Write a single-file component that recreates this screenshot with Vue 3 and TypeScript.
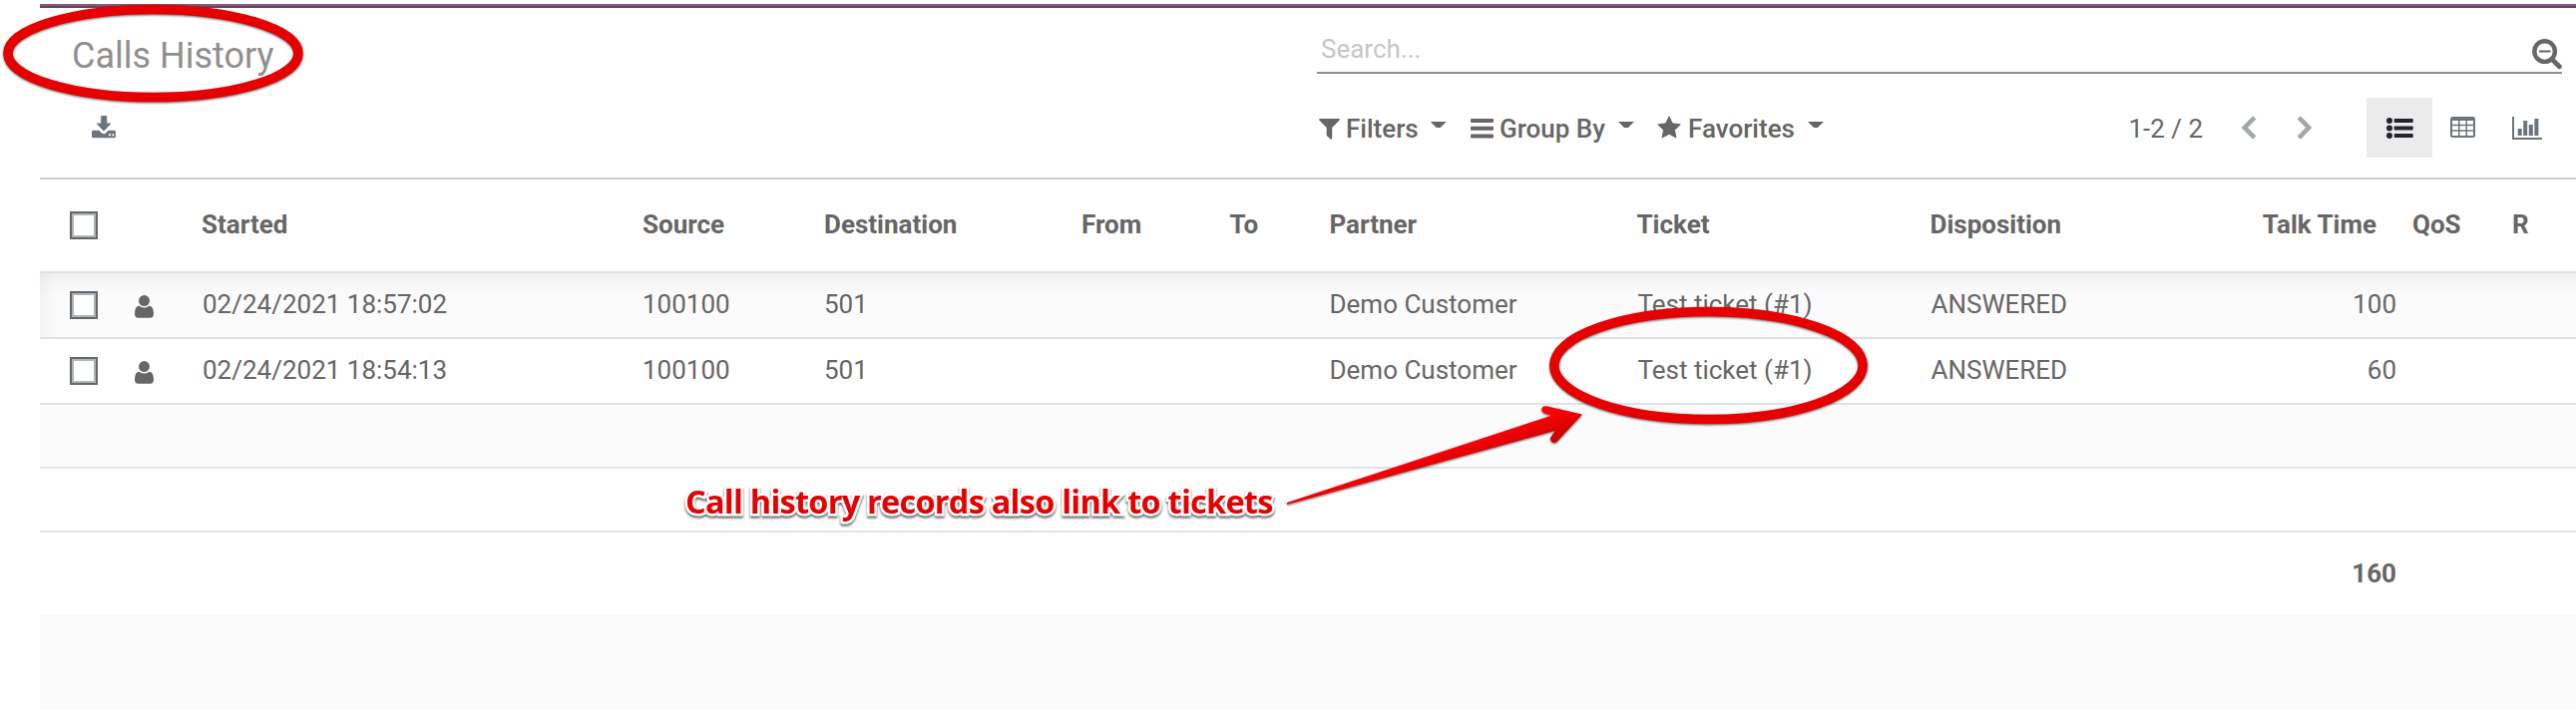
<script setup lang="ts">
interface Call { started: string; source: string; destination: string; partner: string; ticket: string; disposition: string; talk: number }
const calls: Call[] = [
  { started: '02/24/2021 18:57:02', source: '100100', destination: '501', partner: 'Demo Customer', ticket: 'Test ticket (#1)', disposition: 'ANSWERED', talk: 100 },
  { started: '02/24/2021 18:54:13', source: '100100', destination: '501', partner: 'Demo Customer', ticket: 'Test ticket (#1)', disposition: 'ANSWERED', talk: 60 },
]
const total = calls.reduce((sum, c) => sum + c.talk, 0)
</script>

<template>
  <div class="page">
    <main class="panel">
      <div class="brandbar"></div>
      <header class="control">
        <div class="left">
          <h1>Calls History</h1>
          <button class="export" aria-label="Export">
            <svg width="24" height="23" viewBox="0 0 24 23">
              <path fill="#6c757d" d="M10 0h4.300q.9 0 .9.900V7.500h3.500q1 0 .4.800L12.700 15q-.7.700-1.400 0L5 8.300q-.6-.8.400-.8h3.700V.9q0-.9.900-.9z" />
              <path fill="#6c757d" fill-rule="evenodd" d="M1.500 14.700h5.800l2.500 2.500q2.200 2 4.400 0l2.500-2.500h5.800q1.500 0 1.500 1.500v4.600q0 1.500-1.500 1.500h-21Q0 22.300 0 20.800v-4.600q0-1.500 1.500-1.500zM17 18.300v1.900h1.900v-1.900zM20.400 18.300v1.900h1.900v-1.900z" />
            </svg>
          </button>
        </div>
        <div class="right">
          <div class="search">
            <span>Search...</span>
            <svg width="31" height="31" viewBox="0 0 31 31" fill="none" stroke="#666">
              <circle cx="13.600" cy="12.600" r="10.300" stroke-width="4.400" />
              <path d="M21 20.500l7.300 7.200" stroke-width="4.800" stroke-linecap="round" />
              <path d="M8 12.500h11.500" stroke-width="2" />
            </svg>
          </div>
          <div class="tools">
            <div class="menus">
              <div class="menu filters">
                <svg width="21" height="21" viewBox="0 0 21 21"><path fill="#666" d="M.8 0h19.400q1.100.4.500 1.400L13.200 9v11q-.5 1.200-1.600.6l-3.500-3.400q-.4-.4-.4-.8V9L.3 1.400Q-.3.400.8 0z" /></svg>
                <span>Filters</span><i class="caret"></i>
              </div>
              <div class="menu group">
                <svg width="23" height="20" viewBox="0 0 23 20" fill="#666"><rect width="23" height="4" rx="1" /><rect y="7.700" width="23" height="4" rx="1" /><rect y="15.400" width="23" height="4" rx="1" /></svg>
                <span>Group By</span><i class="caret"></i>
              </div>
              <div class="menu favorites">
                <svg width="24" height="23" viewBox="0 0 24 23"><path fill="#666" stroke="#666" stroke-linejoin="round" d="M12 .8l3.300 7 7.900 1.100-5.700 5.400 1.400 7.700L12 18.300 5.100 22l1.400-7.700L.8 8.900l7.900-1.100z" /></svg>
                <span>Favorites</span><i class="caret"></i>
              </div>
            </div>
            <div class="pager">
              <span>1-2 / 2</span>
              <svg width="16" height="24" viewBox="0 0 16 24" fill="none" stroke="#a1a7ac" stroke-width="4.600"><path d="M13.800 1.800L3.800 12l10 10.200" /></svg>
              <svg class="next" width="16" height="24" viewBox="0 0 16 24" fill="none" stroke="#a1a7ac" stroke-width="4.600"><path d="M2.200 1.800L12.200 12 2.200 22.200" /></svg>
            </div>
            <div class="views">
              <button class="view active" aria-label="List">
                <svg width="27" height="21" viewBox="0 0 27 21" fill="#212529">
                  <circle cx="3" cy="3" r="3" /><circle cx="3" cy="10.500" r="3" /><circle cx="3" cy="18" r="3" />
                  <rect x="7.700" y="1" width="19" height="4" rx=".8" /><rect x="7.700" y="8.500" width="19" height="4" rx=".8" /><rect x="7.700" y="16" width="19" height="4" rx=".8" />
                </svg>
              </button>
              <button class="view pivot" aria-label="Pivot">
                <svg width="25" height="21" viewBox="0 0 25 21">
                  <path fill="#6c757d" fill-rule="evenodd" d="M2.500 0h20Q25 0 25 2.500v16q0 2.500-2.500 2.500h-20Q0 21 0 18.500v-16Q0 0 2.500 0zM2 4v3.700h6V4zM9.500 4v3.700h6V4zM17 4v3.700h6V4zM2 9.200v4h6v-4zM9.500 9.200v4h6v-4zM17 9.200v4h6v-4zM2 14.700v4.300h6v-4.300zM9.500 14.700v4.300h6v-4.300zM17 14.700v4.300h6v-4.300z" />
                </svg>
              </button>
              <button class="view graph" aria-label="Graph">
                <svg width="30" height="23" viewBox="0 0 30 23" fill="#6c757d">
                  <path d="M0 0h2v21h28v2H0z" /><rect x="5.700" y="12" width="4" height="7" /><rect x="11.200" y="4" width="4" height="15" /><rect x="16.800" y="8" width="4" height="11" /><rect x="22.400" y="2" width="4" height="17" />
                </svg>
              </button>
            </div>
          </div>
        </div>
      </header>

      <section class="list">
        <div class="row head">
          <span class="check"><i class="box"></i></span><span></span>
          <span>Started</span><span>Source</span><span>Destination</span><span>From</span><span>To</span>
          <span>Partner</span><span>Ticket</span><span>Disposition</span><span class="talk">Talk Time</span><span class="qos">QoS</span><span>R</span>
        </div>
        <div v-for="(c, i) in calls" :key="c.started" class="row data" :class="{ first: i === 0 }">
          <span class="check"><i class="box"></i></span>
          <span class="user">
            <svg width="19" height="23" viewBox="0 0 19 23" fill="#666"><circle cx="9.500" cy="5.600" r="5.500" /><path d="M4.600 10.700q4.900 3.800 9.800 0Q19 11 19 18.500q0 4.200-3.400 4.200H3.400Q0 22.700 0 18.500 0 11 4.600 10.700z" /></svg>
          </span>
          <span class="started">{{ c.started }}</span><span>{{ c.source }}</span><span>{{ c.destination }}</span><span></span><span></span>
          <span>{{ c.partner }}</span><span class="ticket">{{ c.ticket }}</span><span class="disp">{{ c.disposition }}</span><span class="talk">{{ c.talk }}</span><span></span><span></span>
        </div>
        <div class="row empty shaded"></div>
        <div class="row empty"></div>
        <div class="row foot"><span class="talk">{{ total }}</span></div>
      </section>
    </main>

    <svg class="marks" width="2582" height="712" viewBox="0 0 2582 712">
      <defs>
        <linearGradient id="shaft" gradientUnits="userSpaceOnUse" x1="1484" y1="438" x2="1491" y2="460">
          <stop offset="0" stop-color="#fa0306" /><stop offset="1" stop-color="#cc0000" />
        </linearGradient>
      </defs>
      <g class="drop">
        <ellipse cx="153.500" cy="53.500" rx="145.500" ry="44" fill="none" stroke="#e60000" stroke-width="9.600" />
        <ellipse cx="1712.500" cy="366.500" rx="154.700" ry="54" fill="none" stroke="#e60000" stroke-width="9.600" />
        <path fill="url(#shaft)" d="M1290 504L1555 416.700 1547.500 414.300Q1543.500 411 1546.500 408 1548.500 406.500 1552 407.700L1586 415.500 1561 442.500Q1558 445.500 1555 442.700 1553 440 1555 437.500L1559 431.700 1290 506z" />
      </g>
    </svg>
    <div class="note">Call history records also link to tickets</div>
  </div>
</template>

<style>
body { margin: 0; background: #fff; }
</style>

<style scoped>
* { box-sizing: border-box; }
.page { position: relative; width: 2582px; height: 712px; padding-left: 40px; overflow: hidden; background: #fff; color: #666; font: 26px/30px Roboto, "Noto Sans", sans-serif; }
.panel { display: flex; flex-direction: column; height: 712px; padding-top: 4px; background: linear-gradient(#fff 0 8px, #f9f9f9 8px); }
.brandbar { height: 4px; background: linear-gradient(#875a7b 50%, #68465f 50%); }
.control { display: flex; justify-content: space-between; height: 172px; padding-right: 14px; background: #fff; border-bottom: 2px solid #ccc; }
.left { padding: 27px 0 0 32px; }
h1 { margin: 0; font-size: 36px; line-height: 42px; font-weight: 400; color: #8f8f8f; }
button { display: flex; align-items: center; justify-content: center; padding: 0; border: 0; background: none; }
svg { display: block; flex: none; }
.export { margin: 39px 0 0 20px; }
.right { width: 1248px; }
.search { display: flex; justify-content: space-between; height: 66px; padding: 26px 0 0 4px; border-bottom: 2px solid #8f8f8f; color: #c6c6c6; }
.search svg { margin-top: 5px; }
.tools { display: flex; height: 60px; margin-top: 24px; }
.menus { display: flex; flex: none; width: 812px; font-weight: 500; }
.menu { display: flex; flex: none; height: 60px; align-items: center; padding-top: 2px; }
.menu svg { margin-right: 7px; }
.filters { width: 154px; padding-left: 2px; }
.filters svg { margin-right: 6px; }
.group { width: 187px; }
.group svg { margin-right: 6px; }
.favorites svg { margin-top: -3px; }
.caret { width: 16px; height: 6px; margin: -8px 0 0 13px; background: #666; clip-path: polygon(0 0, 100% 0, 62% 100%, 38% 100%); }
.filters .caret { margin-left: 12px; }
.pager { display: flex; flex: none; align-items: center; width: 240px; }
.pager span { width: 114px; padding: 2px 0 0 1.5px; }
.next { margin-left: 40px; }
.views { display: flex; }
.view { width: 66px; height: 60px; }
.view.active { padding-top: 1px; background: #ebebeb; }
.view.pivot { width: 61px; padding-bottom: 1px; }
.view.graph { width: 68px; padding-top: 1px; }
.row { display: grid; grid-template-columns: 63px 99px 442px 182px 258px 148.5px 100px 308px 294px 279.5px 189px 115px 64px; align-items: center; background: #fff; border-bottom: 2px solid #dee2e6; white-space: nowrap; }
.head { height: 94px; padding-bottom: 2px; font-weight: 700; }
.data { height: 66px; padding-bottom: 2px; }
.data.first { background: linear-gradient(90deg, rgba(0, 0, 0, .03), transparent 14px), linear-gradient(#efefef, #f8f8f8 14px, #fbfbfb 24px); }
.check { padding: 2px 0 0 30px; }
.box { display: block; width: 28px; height: 28px; border: 2px solid #666; background: #fff; box-shadow: inset 0 0 0 2px #adb5bd; }
.user { padding: 4px 0 0 32px; }
.started, .ticket, .disp { padding-left: 1px; }
.talk { text-align: right; }
.head .talk { padding-right: 21px; }
.data .talk { padding-right: 1px; }
.qos { padding-left: 15px; }
.empty { height: 64px; }
.shaded { background: #fbfbfb; }
.foot { height: 82px; border: 0; font-weight: 700; }
.foot .talk { grid-column: 11; padding-right: 1px; }
.marks { position: absolute; inset: 0; }
.drop { filter: drop-shadow(0 1px 1px rgba(0, 0, 0, .6)); }
.note { position: absolute; left: 687px; top: 480px; font: 700 32.5px/46px "Open Sans", "Noto Sans", sans-serif; letter-spacing: -.76px; color: #e60000; white-space: nowrap; -webkit-text-stroke: 5px #fff; paint-order: stroke fill; filter: drop-shadow(0 2px 1px rgba(0, 0, 0, .6)); }
</style>
